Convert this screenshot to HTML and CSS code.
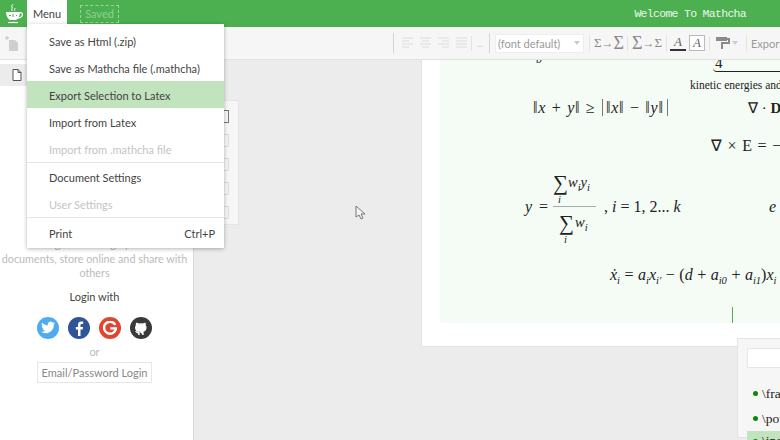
FILE: index.html
```html
<!DOCTYPE html>
<html lang="en">
<head>
<meta charset="utf-8">
<title>Mathcha</title>
<link rel="stylesheet" href="styles.css">
</head>
<body>
<div class="app">
  <header class="topbar">
    <div class="logo">
      <svg width="18" height="22" viewBox="0 0 18 22"><path d="M1 9h14c0 4-2 7-4 8H5c-2-1-4-4-4-8z" fill="#fff"/><path d="M14 10c3-1 4 1 3 3s-3 2-4 2" fill="none" stroke="#fff" stroke-width="1.300"/><path d="M3 19.500h10" stroke="#fff" stroke-width="1.200"/><path d="M7 8c-1-2 1-2 0-4s1-2 1-3M10 8c-1-1 0-2 0-3" fill="none" stroke="#fff" stroke-width="1"/><path d="M4 12l1 1 1-1M8 11v3M11 12l1 1" stroke="#4caf50" stroke-width="1" fill="none"/></svg>
    </div>
    <div class="menu-tab">Menu</div>
    <div class="saved">Saved</div>
    <div class="welcome">Welcome To Mathcha</div>
  </header>
  <div class="toolbar">
    <div class="tool-left">
      <svg width="16" height="18" viewBox="0 0 16 18"><path d="M6 6h6l3 3v8H6z" fill="#cfcfcf"/><path d="M2 4h4M4 2v4" stroke="#cfcfcf" stroke-width="1.500"/></svg>
    </div>
    <div class="tool-right">
      <span class="sep tall"></span>
      <svg class="align" width="66" height="12" viewBox="0 0 66 12"><path d="M0 1h11M0 4h7M0 7h11M0 10h7M18 1h11M20 4h7M18 7h11M20 10h7M36 1h11M40 4h7M36 7h11M40 10h7M54 1h11M54 4h11M54 7h11M54 10h11" stroke="#dcdcdc" stroke-width="1.200"/></svg>
      <span class="sep"></span>
      <span class="dots">...</span>
      <span class="sep tall"></span>
      <div class="font-select"><span>(font default)</span><i class="caret"></i></div>
      <span class="sep"></span>
      <span class="sum first"><span class="s-sm">Σ</span>→<span class="s-lg">Σ</span></span>
      <span class="sep"></span>
      <span class="sum second"><span class="s-lg">Σ</span>→<span class="s-sm">Σ</span></span>
      <span class="sep"></span>
      <span class="glyph underlined">A</span>
      <span class="glyph boxed">A</span>
      <span class="sep"></span>
      <svg class="paint" width="14" height="14" viewBox="0 0 14 14"><path d="M0 1h11v4H0z" fill="#8a8a8a"/><path d="M11 3h2v4H6v6" fill="none" stroke="#8a8a8a" stroke-width="2"/></svg>
      <i class="caret small"></i>
      <span class="sep"></span>
      <span class="export">Export</span>
    </div>
  </div>
  <div class="body">
    <aside class="sidebar">
      <div class="doc-row">
        <svg width="10" height="12" viewBox="0 0 10 12"><path d="M1 .5h5l3 3v8H1z M6 .5v3h3" fill="#fff" stroke="#555"/></svg>
      </div>
      <div class="login">
        <p class="blurb"><span class="blurb-first">Login to manage your</span>documents, store online and share with<br>others</p>
        <p class="login-with">Login with</p>
        <div class="socials">
          <span class="social tw"><svg width="16" height="14" viewBox="0 0 16 14"><path d="M15 2.200c-.5.2-1 .4-1.600.4.600-.3 1-.9 1.200-1.500-.5.300-1.100.6-1.800.7A2.800 2.800 0 0 0 7.900 4.400C5.600 4.300 3.500 3.200 2.100 1.500c-.8 1.300-.4 2.900.9 3.700-.5 0-.9-.1-1.300-.3 0 1.300.9 2.500 2.300 2.800-.4.100-.8.100-1.300 0 .4 1.100 1.400 1.900 2.600 1.900-1.200 1-2.700 1.400-4.200 1.200C2.400 11.700 3.900 12.200 5.500 12.200c5.400 0 8.500-4.600 8.300-8.700.5-.4 1-.8 1.200-1.300z" fill="#fff"/></svg></span>
          <span class="social fb"><svg width="10" height="15" viewBox="0 0 10 15"><path d="M6.500 15V8.500h2.200l.4-2.600H6.500V4.300c0-.8.300-1.300 1.400-1.300h1.300V.7C8.900.6 8.200.5 7.300.5 5.300.5 4 1.700 4 3.900v2H1.800v2.600H4V15z" fill="#fff"/></svg></span>
          <span class="social gg"><svg width="14" height="14" viewBox="0 0 14 14"><path d="M12.300 3.800A6 6 0 1 0 13 7.400H7.300" fill="none" stroke="#fff" stroke-width="2.400"/></svg></span>
          <span class="social gh"><svg width="14" height="15" viewBox="0 0 14 15"><path d="M5 14v-2.500c-2.500.6-3-1-3.300-1.500M9 14v-2.500c0-.7-.2-1-.5-1.300 1.800-.2 3.400-1 3.400-3.700 0-.9-.3-1.600-.8-2.200.1-.5.100-1.200-.1-1.900-.8 0-1.500.4-2.100.8a7 7 0 0 0-3.800 0C4.100 2.900 3.400 2.500 2.600 2.500c-.2.700-.2 1.400-.1 1.900-.5.600-.8 1.300-.8 2.200 0 2.700 1.600 3.500 3.400 3.700" fill="#fff" stroke="#fff" stroke-width="1.300"/></svg></span>
        </div>
        <p class="or">or</p>
        <button class="email-login">Email/Password Login</button>
      </div>
    </aside>
    <main class="workspace">
      <div class="side-strip">
        <i class="mini dark"></i><i class="mini"></i><i class="mini"></i><i class="mini"></i><i class="mini"></i>
      </div>
      <div class="page">
        <div class="sheet">
          <span class="eq e00"><i>σ</i></span>
          <span class="eq e0"><i>b</i></span>
          <span class="eq e1">4</span>
          <span class="brace"></span>
          <span class="eq e2">kinetic energies and</span>
          <span class="eq e3">‖<i>x</i> + <i>y</i>‖ ≥ <span class="bars">‖<i>x</i>‖ − ‖<i>y</i>‖</span></span>
          <span class="eq e4">∇ · <b>D</b></span>
          <span class="eq e5">∇ × E = −</span>
          <span class="eq e6"><i>y</i> =</span>
          <div class="frac">
            <div class="frac-top"><span class="big">∑</span><span class="fv"><i>w<sub>i</sub>y<sub>i</sub></i></span><i class="under">i</i></div>
            <div class="frac-bot"><span class="big">∑</span><span class="fv"><i>w<sub>i</sub></i></span><i class="under">i</i></div>
          </div>
          <span class="eq e7">, <i>i</i> = 1, 2... <i>k</i></span>
          <span class="eq e8"><i>e</i></span>
          <span class="eq e9"><i>x&#775;<sub>i</sub></i> = <i>a<sub>i</sub>x<sub>i′</sub></i> − (<i>d</i> + <i>a<sub>i0</sub></i> + <i>a<sub>i1</sub></i>)<i>x<sub>i</sub></i></span>
          <span class="cursor-line"></span>
        </div>
      </div>
      <div class="snippets">
        <div class="snip-input"></div>
        <div class="snip"><i class="dot"></i>\frac</div>
        <div class="snip"><i class="dot"></i>\pow</div>
        <div class="snip on"><i class="dot"></i>\ind</div>
      </div>
      <svg class="pointer" width="12" height="16" viewBox="0 0 12 16"><path d="M1 1v11l3-2 2 4 2-1-2-4h4z" fill="#f4f4f4" stroke="#777"/></svg>
    </main>
  </div>
  <nav class="menu">
    <div class="item">Save as Html (.zip)</div>
    <div class="item">Save as Mathcha file (.mathcha)</div>
    <div class="item hot">Export Selection to Latex</div>
    <div class="item">Import from Latex</div>
    <div class="item off">Import from .mathcha file</div>
    <div class="rule"></div>
    <div class="item">Document Settings</div>
    <div class="item off">User Settings</div>
    <div class="rule"></div>
    <div class="item print"><span>Print</span><span>Ctrl+P</span></div>
  </nav>
</div>
</body>
</html>
```
FILE: styles.css
```css
* { box-sizing: border-box; }
html, body { margin: 0; height: 100%; overflow: hidden; }
body { font-family: "Lato", "Open Sans", sans-serif; font-size: 11px; color: #333; }
.app { position: relative; width: 780px; height: 440px; overflow: hidden; display: flex; flex-direction: column; background: #ececec; }

.topbar { height: 27px; flex: none; background: #4caf50; display: flex; align-items: center; position: relative; }
.logo { width: 27px; height: 27px; display: flex; align-items: center; justify-content: center; }
.menu-tab { width: 40px; height: 27px; background: #fff; display: flex; align-items: center; justify-content: center; font-size: 11px; color: #444; }
.saved { margin-left: 13px; width: 39px; height: 18px; border: 1px dashed #9ad49c; color: #8ed191; font-size: 11px; display: flex; align-items: center; justify-content: center; }
.welcome { margin-left: auto; margin-right: 34px; font-family: "Liberation Mono", monospace; font-size: 11.500px; letter-spacing: -.7px; color: #eaf6ea; }

.toolbar { height: 33px; flex: none; background: #f6f6f6; border-bottom: 1px solid #e2e2e2; display: flex; align-items: center; justify-content: space-between; }
.tool-left { padding-left: 3px; display: flex; }
.tool-right { display: flex; align-items: center; gap: 5px; width: 387px; flex: none; white-space: nowrap; overflow: hidden; }
.sep { width: 1px; height: 15px; background: #e3e3e3; flex: none; }
.sep.tall { height: 20px; background: #d4d4d4; }
.align { margin: 0 -2px 0 3px; flex: none; }
.dots { color: #c8c8c8; font-size: 9px; width: 7px; flex: none; }
.font-select { width: 89px; height: 19px; flex: none; background: #fff; border: 1px solid #eee; display: flex; align-items: center; justify-content: space-between; padding: 0 3px 0 2px; color: #999; font-size: 11px; }
.caret { width: 0; height: 0; border: 3px solid transparent; border-top: 4px solid #ccc; border-bottom: 0; flex: none; }
.caret.small { margin: 0 3px 0 -3px; }
.sum { font-family: "Liberation Serif", serif; color: #888; font-size: 12px; display: flex; align-items: center; justify-content: space-between; flex: none; margin-left: -1px; }
.sum.first { width: 28px; }
.sum.second { width: 29px; }
.s-sm { font-size: 13px; }
.s-lg { font-size: 18px; }
.glyph { font-family: "Liberation Serif", serif; font-style: italic; color: #666; font-size: 13px; width: 16px; height: 16px; display: flex; align-items: center; justify-content: center; flex: none; }
.underlined { border-bottom: 2px solid #333; margin: 0 -2px; }
.boxed { background: #fff; border: 1px solid #bbb; margin-right: -1px; }
.paint { flex: none; margin-left: 1px; }
.export { color: #999; font-size: 11px; margin-left: -1px; }

.body { flex: 1; display: flex; min-height: 0; }
.sidebar { width: 194px; flex: none; background: #fff; border-right: 1px solid #d8d8d8; display: flex; flex-direction: column; padding-top: 4px; }
.doc-row { height: 22px; background: #ececec; display: flex; align-items: center; padding-left: 12px; }
.login { width: 189px; padding-top: 151px; text-align: center; display: flex; flex-direction: column; align-items: center; }
.blurb { margin: 0; color: #bbb; font-size: 10.800px; line-height: 14px; width: 189px; white-space: nowrap; }
.blurb-first { display: block; margin-bottom: 1px; }
.login-with { margin: 10px 0 0; font-size: 11px; line-height: 14px; color: #444; }
.socials { display: flex; gap: 9px; margin-top: 13px; }
.social { width: 22px; height: 22px; border-radius: 50%; display: flex; align-items: center; justify-content: center; }
.tw { background: #4dabf0; }
.fb { background: #2f5597; }
.gg { background: #e0452f; }
.gh { background: #3a3a3a; }
.or { margin: 5px 0 0; color: #bbb; line-height: 16px; }
.email-login { margin-top: 2px; width: 115px; height: 21px; background: #fff; border: 1px solid #e6e6e6; font: inherit; color: #888; padding: 0; }

.workspace { flex: 1; position: relative; overflow: hidden; }
.side-strip { position: absolute; left: 0; top: 40px; width: 45px; height: 125px; background: #f6f6f6; border: 1px solid #e4e4e4; display: flex; flex-direction: column; align-items: flex-end; padding: 9px 9px 0 0; gap: 11px; }
.mini { width: 7px; height: 13px; border: 1px solid #ddd; flex: none; }
.mini.dark { border-color: #777; }
.page { position: absolute; left: 227px; top: -10px; width: 600px; height: 297px; background: #fff; border: 1px solid #e2e2e2; padding-left: 18px; }
.sheet { position: relative; width: 100%; height: 272px; background: #f5fbf5; font-family: "Liberation Serif", serif; color: #222; font-size: 16px; }
.eq { position: absolute; white-space: nowrap; }
.eq sub, .fv sub { font-size: 10.500px; line-height: 0; }
.e00 { left: 87px; top: -8px; font-size: 15px; }
.e0 { left: 96px; top: 1px; font-size: 12px; }
.e1 { left: 275px; top: 4px; font-size: 15px; }
.brace { position: absolute; left: 273px; top: 17px; width: 120px; height: 4px; border-bottom: 1px solid #222; border-radius: 0 0 4px 4px; }
.e2 { left: 250px; top: 28px; font-size: 11.500px; }
.e3 { left: 93px; top: 48px; letter-spacing: .7px; word-spacing: 1px; }
.bars { border-left: 1px solid #777; border-right: 1px solid #777; padding: 0 3px; margin-left: 1px; }
.e4 { left: 308px; top: 48px; font-size: 15px; }
.e5 { left: 271px; top: 85px; word-spacing: 1px; letter-spacing: .3px; }
.e6 { left: 85px; top: 147px; word-spacing: 3px; }
.frac { position: absolute; left: 113px; top: 120px; width: 43px; font-size: 14.500px; }
.frac-top { height: 36px; border-bottom: 1px solid #aaa; position: relative; }
.frac-bot { position: relative; height: 36px; }
.big { position: absolute; top: 0; left: 0; font-size: 21px; }
.fv { position: absolute; left: 15px; top: 3px; white-space: nowrap; }
.frac-bot .big { left: 6px; top: 4px; }
.frac-bot .fv { left: 22px; top: 7px; }
.under { position: absolute; left: 5px; top: 23px; font-size: 10.500px; }
.frac-bot .under { left: 11px; top: 27px; }
.e7 { left: 164px; top: 147px; }
.e8 { left: 329px; top: 147px; }
.e9 { left: 170px; top: 215px; word-spacing: .5px; }
.cursor-line { position: absolute; left: 292px; top: 256px; width: 1px; height: 16px; background: #4caf50; }
.snippets { position: absolute; left: 543px; top: 278px; width: 60px; height: 100px; background: #f6f6f6; border: 1px solid #e4e4e4; padding: 9px; }
.snip-input { height: 20px; background: #fff; border: 1px solid #e6e6e6; margin-bottom: 13px; }
.snip { font-family: "Liberation Serif", serif; font-size: 13.500px; color: #222; height: 25px; display: flex; align-items: center; gap: 4px; padding-left: 6px; }
.snip.on { background: #c1e3be; height: 20px; }
.dot { width: 5px; height: 5px; border-radius: 50%; background: #0a8a0a; flex: none; }
.pointer { position: absolute; left: 161px; top: 145px; }

.menu { position: absolute; left: 27px; top: 24px; width: 197px; background: #fff; box-shadow: 0 1px 4px rgba(0,0,0,.3); padding-top: 3px; color: #444; }
.item { height: 27px; padding: 1px 9px 0 22px; display: flex; align-items: center; justify-content: space-between; font-size: 11px; }
.item.hot { background: #c1e3be; }
.item.off { color: #c4c4c4; }
.item.print { height: 30px; }
.rule { height: 1px; background: #e6e6e6; }
```
